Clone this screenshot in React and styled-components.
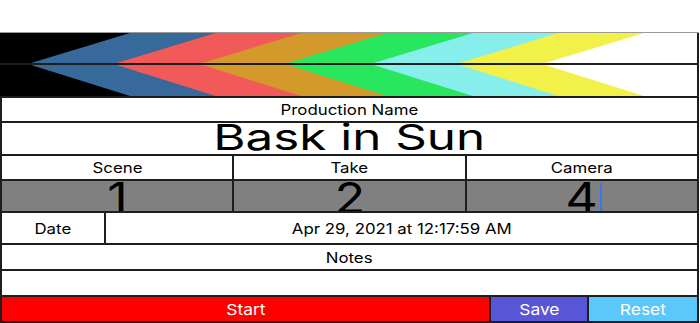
import React from "react";
import styled, { createGlobalStyle } from "styled-components";

const Global = createGlobalStyle`
  html, body { margin: 0; padding: 0; background: #fff; }
  body { font-family: Inter, "Liberation Sans", sans-serif; color: #000; }
`;

const Page = styled.div`
  padding-top: 32px;
  width: 700px;
`;

const Board = styled.div`
  width: 699px;
  box-sizing: border-box;
  border-top: 1px solid #9a9a9a;
  background: #1e1e1e;
  padding: 0 2px 2px 2px;
  display: flex;
  flex-direction: column;
  gap: 2px;
`;

const ClapHalf = styled.svg`
  display: block;
  height: ${(p) => p.$h}px;
  margin-left: -2px;
  width: calc(100% + 2px);
`;

const Row = styled.div`
  display: grid;
  grid-template-columns: ${(p) => p.$cols || "1fr"};
  gap: 2px;
  height: ${(p) => p.$h}px;
`;

const Cell = styled.div`
  background: ${(p) => p.$bg || "#fff"};
  color: ${(p) => p.$fg || "#000"};
  overflow: hidden;
  display: flex;
  justify-content: center;
  align-items: ${(p) => (p.$top ? "flex-start" : "center")};
  min-width: 0;
  white-space: nowrap;
`;

const Txt = styled.span`
  display: inline-block;
  font-size: ${(p) => p.$size || 14.5}px;
  line-height: ${(p) => p.$lh || "normal"};
  transform: scaleX(${(p) => p.$sx || 1.16});
  margin-top: ${(p) => p.$mt || 0}px;
`;

const NumWrap = styled.div`
  position: relative;
  display: inline-block;
`;

const Caret = styled.span`
  position: absolute;
  top: 2px;
  right: -7px;
  width: 2px;
  height: 30px;
  background: #3478f6;
`;

const COLORS = ["#000000", "#37699b", "#f25a5a", "#d4992b", "#28e65d", "#86eeeb", "#f2f14a", "#ffffff"];

function Clapper({ flip, h }) {
  const polys = [];
  for (let k = 6; k >= 0; k--) {
    const apex = 31 + 85.7 * k;
    const top = apex + 99;
    const pts = flip
      ? `0,0 ${apex},0 ${top},${h} 0,${h}`
      : `0,0 ${top},0 ${apex},${h} 0,${h}`;
    polys.push(<polygon key={k} points={pts} fill={COLORS[k]} />);
  }
  return (
    <ClapHalf $h={h} viewBox={`0 0 697 ${h}`} preserveAspectRatio="none">
      <rect x="0" y="0" width="697" height={h} fill="#fff" />
      {polys}
    </ClapHalf>
  );
}

export default function App() {
  return (
    <Page>
      <Global />
      <Board>
        <Clapper h={30} />
        <Clapper h={31} flip />
        <Row $h={23}>
          <Cell><Txt>Production Name</Txt></Cell>
        </Row>
        <Row $h={31}>
          <Cell $top><Txt $size={36} $lh="31px" $sx={1.37} $mt={-1}>Bask in Sun</Txt></Cell>
        </Row>
        <Row $h={23} $cols="1fr 1fr 1fr">
          <Cell><Txt>Scene</Txt></Cell>
          <Cell><Txt>Take</Txt></Cell>
          <Cell><Txt>Camera</Txt></Cell>
        </Row>
        <Row $h={30} $cols="1fr 1fr 1fr">
          <Cell $bg="#808080" $top><Txt $size={42} $lh="42px" $sx={1.2} $mt={-4}>1</Txt></Cell>
          <Cell $bg="#808080" $top><Txt $size={42} $lh="42px" $sx={1.2} $mt={-4}>2</Txt></Cell>
          <Cell $bg="#808080" $top>
            <NumWrap>
              <Txt $size={42} $lh="42px" $sx={1.2} $mt={-4}>4</Txt>
              <Caret />
            </NumWrap>
          </Cell>
        </Row>
        <Row $h={30} $cols="102px 1fr">
          <Cell><Txt>Date</Txt></Cell>
          <Cell><Txt>Apr 29, 2021 at 12:17:59 AM</Txt></Cell>
        </Row>
        <Row $h={24}>
          <Cell><Txt>Notes</Txt></Cell>
        </Row>
        <Row $h={24}>
          <Cell />
        </Row>
        <Row $h={24} $cols="487px 96px 1fr">
          <Cell $bg="#ff0000" $fg="#fff"><Txt $size={15}>Start</Txt></Cell>
          <Cell $bg="#5856d6" $fg="#fff"><Txt $size={15}>Save</Txt></Cell>
          <Cell $bg="#5ac8fa" $fg="#fff"><Txt $size={15}>Reset</Txt></Cell>
        </Row>
      </Board>
    </Page>
  );
}
